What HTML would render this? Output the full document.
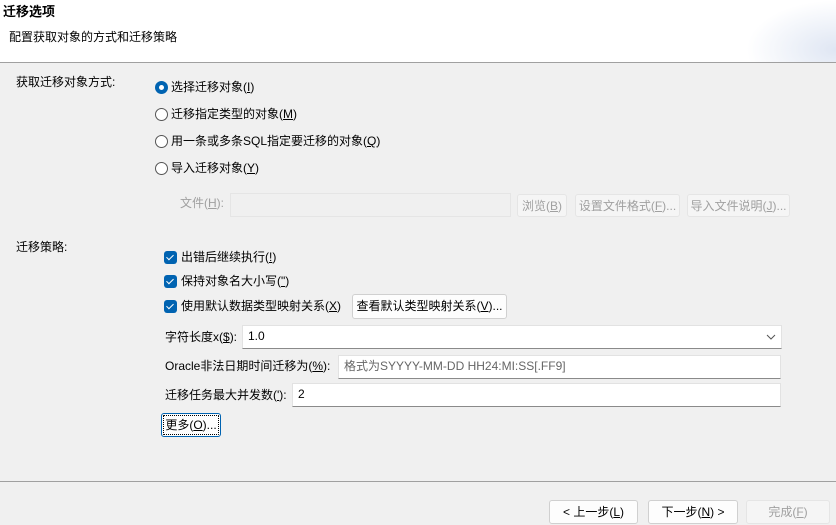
<!DOCTYPE html>
<html><head><meta charset="utf-8"><style>
body{margin:0;width:836px;height:525px;background:#f0f0f0;font-family:"Liberation Sans","Noto Sans CJK SC",sans-serif;font-size:12px;color:#000;position:relative;overflow:hidden}
.a{position:absolute;white-space:nowrap;line-height:16px}
.hdr{position:absolute;left:0;top:0;width:836px;height:62px;background:#fff;border-bottom:1px solid #a0a0a0}
.rad{position:absolute;width:11px;height:11px;border:1px solid #555;border-radius:50%;background:#fff}
.rad.on{border-color:#0063b1;background:#0063b1}
.rad.on::after{content:"";position:absolute;left:3px;top:3px;width:5px;height:5px;border-radius:50%;background:#fff}
.cb{position:absolute;width:13px;height:13px;border-radius:3px;background:#0063b1}
.cb::after{content:"";position:absolute;left:4px;top:2px;width:3px;height:6px;border:solid #fff;border-width:0 1.3px 1.3px 0;transform:rotate(45deg)}
.btn{position:absolute;border:1px solid #d0d0d0;border-radius:3px;background:#fdfdfd;text-align:center;line-height:22px;box-sizing:border-box;white-space:nowrap}
.dis{color:#a0a0a0;background:#f5f5f5;border-color:#e5e5e5}
.in{position:absolute;background:#fff;border:1px solid #e2e2e2;border-bottom-color:#8a8a8a;box-sizing:border-box;line-height:21px;padding-left:5px}
u{text-decoration:underline}
</style></head><body>
<div class="hdr"></div>
<div style="position:absolute;right:0;top:0;width:90px;height:62px;background:radial-gradient(ellipse at 100% 80%,#dfe6f3 0%,#fff 70%)"></div>
<div class="a" style="left:3px;top:4px;font-weight:bold;font-size:13px">迁移选项</div>
<div class="a" style="left:9px;top:29px">配置获取对象的方式和迁移策略</div>

<div class="a" style="left:16px;top:74px">获取迁移对象方式:</div>
<div class="rad on" style="left:155px;top:81px"></div><div class="a" style="left:171px;top:79px">选择迁移对象(<u>I</u>)</div>
<div class="rad" style="left:155px;top:108px"></div><div class="a" style="left:171px;top:106px">迁移指定类型的对象(<u>M</u>)</div>
<div class="rad" style="left:155px;top:135px"></div><div class="a" style="left:171px;top:133px">用一条或多条SQL指定要迁移的对象(<u>Q</u>)</div>
<div class="rad" style="left:155px;top:162px"></div><div class="a" style="left:171px;top:160px">导入迁移对象(<u>Y</u>)</div>

<div class="a" style="left:180px;top:195px;color:#a0a0a0">文件(<u>H</u>):</div>
<div style="position:absolute;left:230px;top:193px;width:281px;height:24px;border:1px solid #e5e5e5;background:#f0f0f0;box-sizing:border-box"></div>
<div class="btn dis" style="left:517px;top:194px;width:50px;height:23px">浏览(<u>B</u>)</div>
<div class="btn dis" style="left:575px;top:194px;width:105px;height:23px">设置文件格式(<u>F</u>)...</div>
<div class="btn dis" style="left:687px;top:194px;width:103px;height:23px">导入文件说明(<u>J</u>)...</div>

<div class="a" style="left:16px;top:239px">迁移策略:</div>
<div class="cb" style="left:164px;top:251px"></div><div class="a" style="left:181px;top:249px">出错后继续执行(<u>!</u>)</div>
<div class="cb" style="left:164px;top:275px"></div><div class="a" style="left:181px;top:273px">保持对象名大小写(<u>"</u>)</div>
<div class="cb" style="left:164px;top:300px"></div><div class="a" style="left:181px;top:298px">使用默认数据类型映射关系(<u>X</u>)</div>
<div class="btn" style="left:352px;top:294px;width:155px;height:25px;line-height:23px">查看默认类型映射关系(<u>V</u>)...</div>

<div class="a" style="left:165px;top:329px">字符长度x(<u>$</u>):</div>
<div class="in" style="left:242px;top:325px;width:540px;height:24px">1.0<svg style="position:absolute;right:5px;top:8px" width="10" height="6" viewBox="0 0 10 6"><path d="M1 1L5 5L9 1" stroke="#555" fill="none" stroke-width="1"/></svg></div>
<div class="a" style="left:165px;top:358px">Oracle非法日期时间迁移为(<u>%</u>):</div>
<div class="in" style="left:338px;top:355px;width:443px;height:24px;color:#666">格式为SYYYY-MM-DD HH24:MI:SS[.FF9]</div>
<div class="a" style="left:165px;top:387px">迁移任务最大并发数(<u>'</u>):</div>
<div class="in" style="left:292px;top:383px;width:489px;height:24px">2</div>
<div class="btn" style="left:161px;top:413px;width:60px;height:24px;border:1px solid #0063b1;outline:1px dotted #000;outline-offset:-3px">更多(<u>O</u>)...</div>

<div style="position:absolute;left:0;top:481px;width:836px;height:1px;background:#a0a0a0"></div>
<div class="btn" style="left:549px;top:500px;width:89px;height:24px">&lt; 上一步(<u>L</u>)</div>
<div class="btn" style="left:648px;top:500px;width:90px;height:24px">下一步(<u>N</u>) &gt;</div>
<div class="btn dis" style="left:746px;top:500px;width:84px;height:24px">完成(<u>F</u>)</div>
</body></html>
